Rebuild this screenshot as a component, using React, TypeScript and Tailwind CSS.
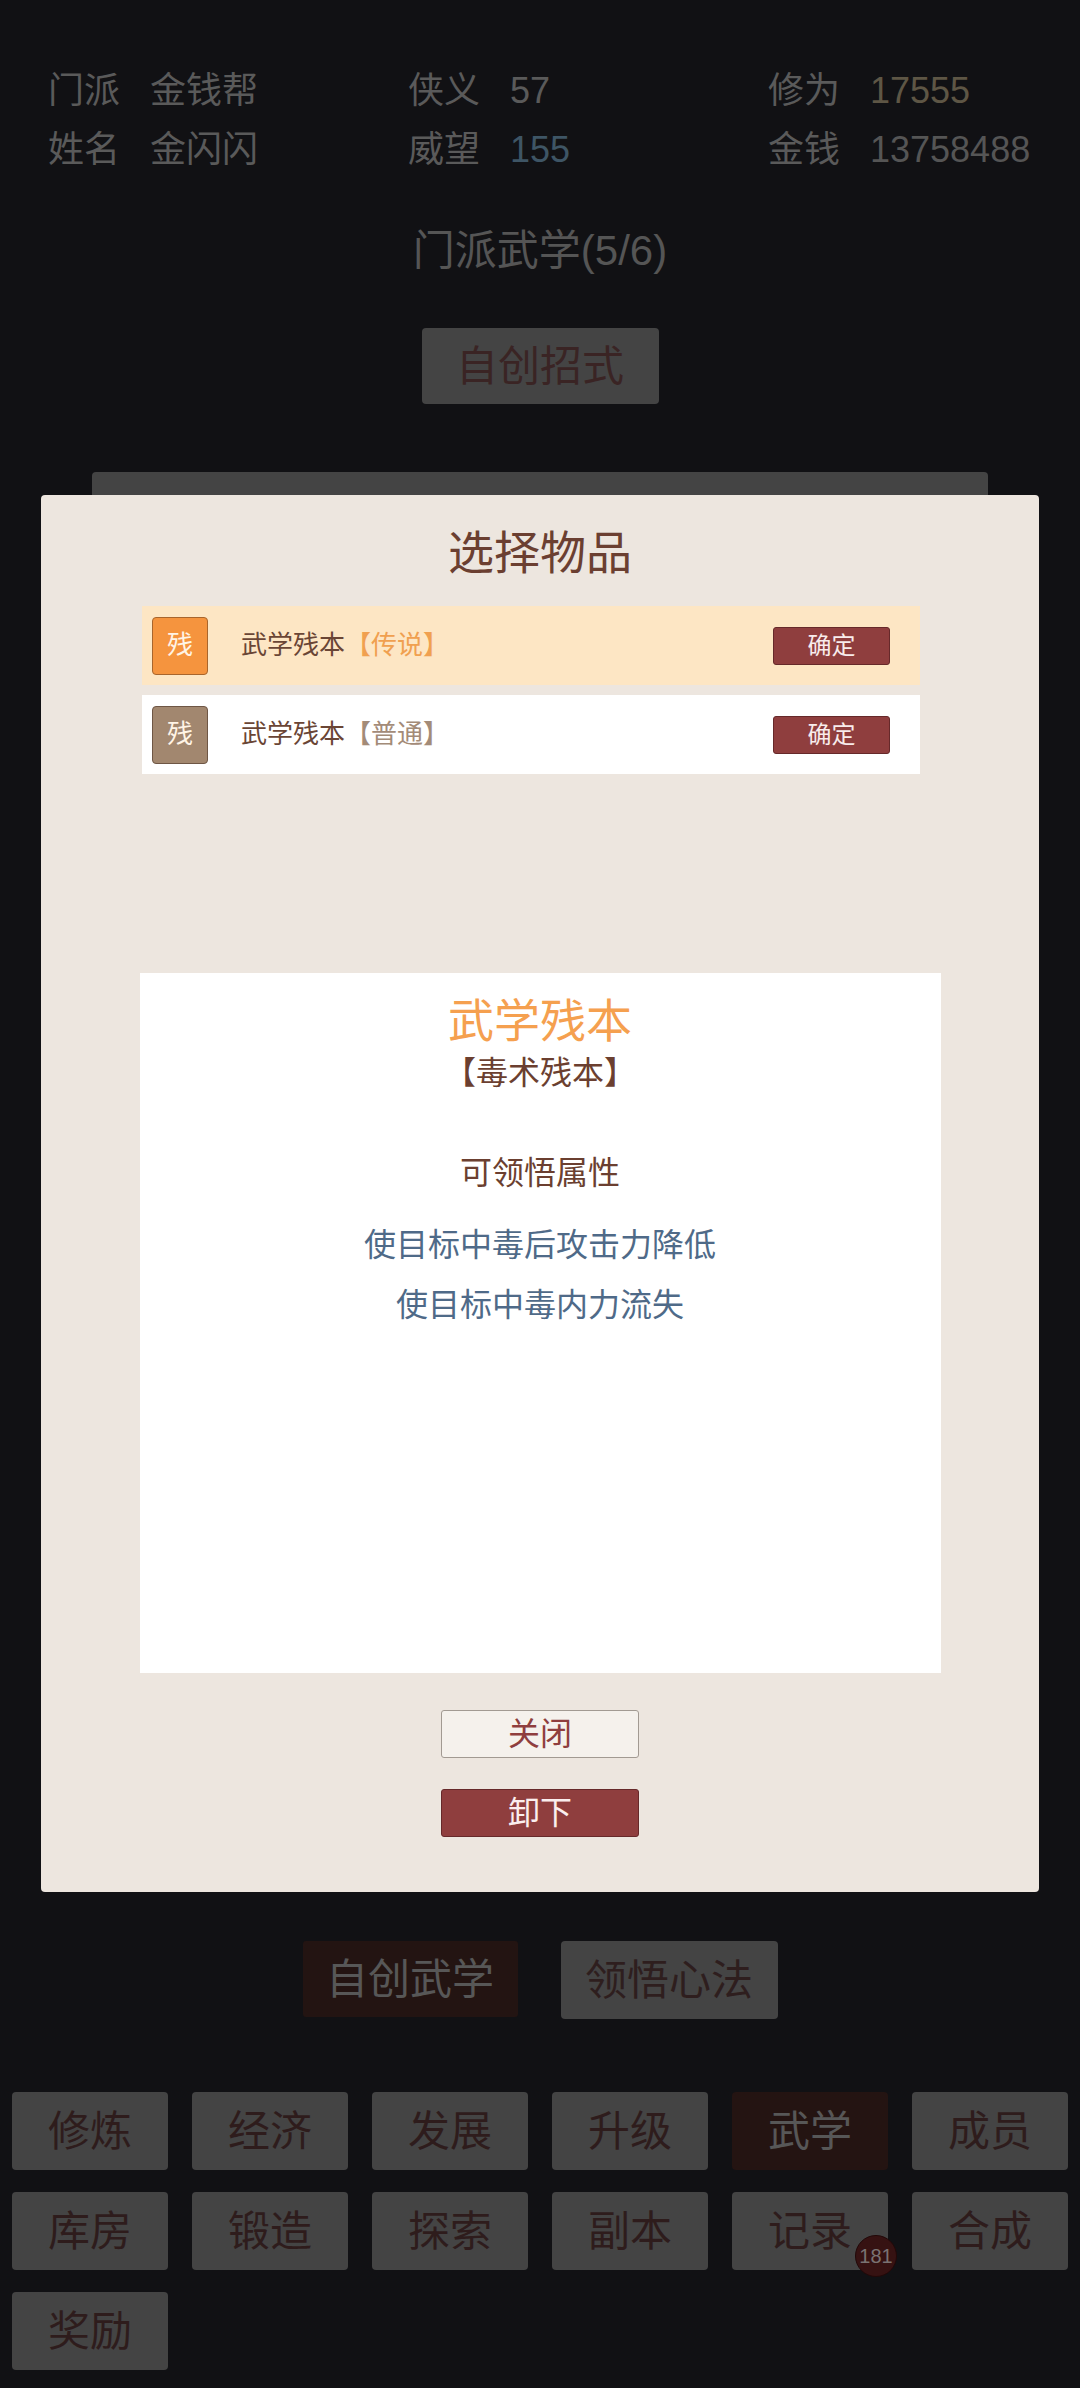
import clsx from 'clsx'

const INFO = [
  [
    { label: '门派', value: '金钱帮', color: 'text-[#5a5a5a]' },
    { label: '侠义', value: '57', color: 'text-[#5a5a5a]' },
    { label: '修为', value: '17555', color: 'text-[#5e5645]' },
  ],
  [
    { label: '姓名', value: '金闪闪', color: 'text-[#5a5a5a]' },
    { label: '威望', value: '155', color: 'text-[#3e5565]' },
    { label: '金钱', value: '13758488', color: 'text-[#555555]' },
  ],
]

const NAV = ['修炼', '经济', '发展', '升级', '武学', '成员', '库房', '锻造', '探索', '副本', '记录', '合成', '奖励']

const ITEMS = [
  { grade: '【传说】', gradeColor: 'text-[#f0a050]', rowBg: 'bg-[#fde6c4]', iconBg: 'bg-[#f5943e] border-[#a8652c]' },
  { grade: '【普通】', gradeColor: 'text-[#a38b78]', rowBg: 'bg-white', iconBg: 'bg-[#a2876f] border-[#6e5645]' },
]

function ItemModal() {
  return (
    <div className="absolute left-[41px] top-[495px] w-[998px] h-[1397px] bg-[#ede6df] rounded-[4px] flex flex-col">
      {/* Title */}
      <div className="pt-[28px] text-center text-[46px] leading-[60px] text-[#6b3f31]">选择物品</div>

      {/* Item list */}
      <div className="ml-[101px] w-[778px] mt-[23px] h-[367px] flex flex-col gap-[10px]">
        {ITEMS.map((it, i) => (
          <div key={i} className={clsx('flex items-center h-[79px] pl-[10px] pr-[30px]', it.rowBg)}>
            <div
              className={clsx(
                'w-[56px] h-[58px] border rounded-[4px] flex items-center justify-center text-[26px] text-[#fff4e6]',
                it.iconBg
              )}
            >
              残
            </div>
            <div className="ml-[33px] text-[26px] text-[#6a4535]">
              武学残本<span className={it.gradeColor}>{it.grade}</span>
            </div>
            <button className="ml-auto w-[117px] h-[38px] bg-[#8f3e3e] border border-[#66292a] rounded-[3px] text-[24px] leading-none text-[#f8ecec]">
              确定
            </button>
          </div>
        ))}
      </div>

      {/* Detail */}
      <div className="mx-auto w-[801px] h-[700px] bg-white flex flex-col items-center pt-[20px]">
        <div className="text-[46px] leading-[56px] text-[#f5a04f]">武学残本</div>
        <div className="mt-[4px] text-[32px] leading-[40px] text-[#6b3f30]">【毒术残本】</div>
        <div className="mt-[60px] text-[32px] leading-[40px] text-[#6b3f30]">可领悟属性</div>
        <div className="mt-[32px] text-[32px] leading-[40px] text-[#4f6a88]">使目标中毒后攻击力降低</div>
        <div className="mt-[20px] text-[32px] leading-[40px] text-[#4f6a88]">使目标中毒内力流失</div>
      </div>

      {/* Actions */}
      <button className="mx-auto mt-[37px] w-[198px] h-[48px] bg-[#f5f1ec] border border-[#a29a92] rounded-[3px] text-[32px] leading-none text-[#8f3e3e]">
        关闭
      </button>
      <button className="mx-auto mt-[31px] w-[198px] h-[48px] bg-[#8f3e3e] border border-[#66292a] rounded-[3px] text-[32px] leading-none text-[#fbeeee]">
        卸下
      </button>
    </div>
  )
}

export default function App() {
  return (
    <div className="relative w-[1080px] min-h-[2388px] bg-[#111114] font-['Liberation_Sans','Noto_Sans_CJK_SC',sans-serif] overflow-hidden">
      {/* Info */}
      <div className="pt-[61px] pl-[48px]">
        {INFO.map((row, r) => (
          <div key={r} className="grid grid-cols-[360px_360px_1fr] h-[59px] items-center">
            {row.map((c) => (
              <div key={c.label} className="flex items-center text-[36px] leading-[44px]">
                <span className="w-[102px] text-[#5a5a5a]">{c.label}</span>
                <span className={c.color}>{c.value}</span>
              </div>
            ))}
          </div>
        ))}
      </div>

      <div className="mt-[42px] text-center text-[42px] leading-[60px] text-[#555555]">门派武学(5/6)</div>

      <div className="mt-[47px] flex justify-center">
        <div className="w-[237px] h-[76px] bg-[#444444] rounded-[4px] flex items-center justify-center text-[42px] text-[#3a2424]">
          自创招式
        </div>
      </div>

      {/* panel behind modal */}
      <div className="mt-[68px] mx-auto w-[896px] h-[1400px] bg-[#444444] rounded-[4px]" />

      <div className="mt-[69px] flex justify-center gap-[43px]">
        <div className="w-[215px] h-[76px] bg-[#231412] rounded-[3px] flex items-center justify-center text-[42px] text-[#575757]">
          自创武学
        </div>
        <div className="w-[217px] h-[78px] bg-[#444444] rounded-[4px] flex items-center justify-center text-[42px] text-[#2e1e1e]">
          领悟心法
        </div>
      </div>

      {/* Nav */}
      <div className="mt-[73px] px-[12px] grid grid-cols-6 gap-x-[24px] gap-y-[22px]">
        {NAV.map((n) => (
          <div
            key={n}
            className={clsx(
              'relative h-[78px] rounded-[4px] flex items-center justify-center text-[42px]',
              n === '武学' ? 'bg-[#241412] text-[#575757]' : 'bg-[#444444] text-[#2e1c1c]'
            )}
          >
            {n}
            {n === '记录' && (
              <div className="absolute left-[123px] top-[43px] w-[42px] h-[42px] rounded-full bg-[#361212] border border-[#220808] flex items-center justify-center text-[20px] text-[#7a7272]">
                181
              </div>
            )}
          </div>
        ))}
      </div>

      <ItemModal />
    </div>
  )
}
